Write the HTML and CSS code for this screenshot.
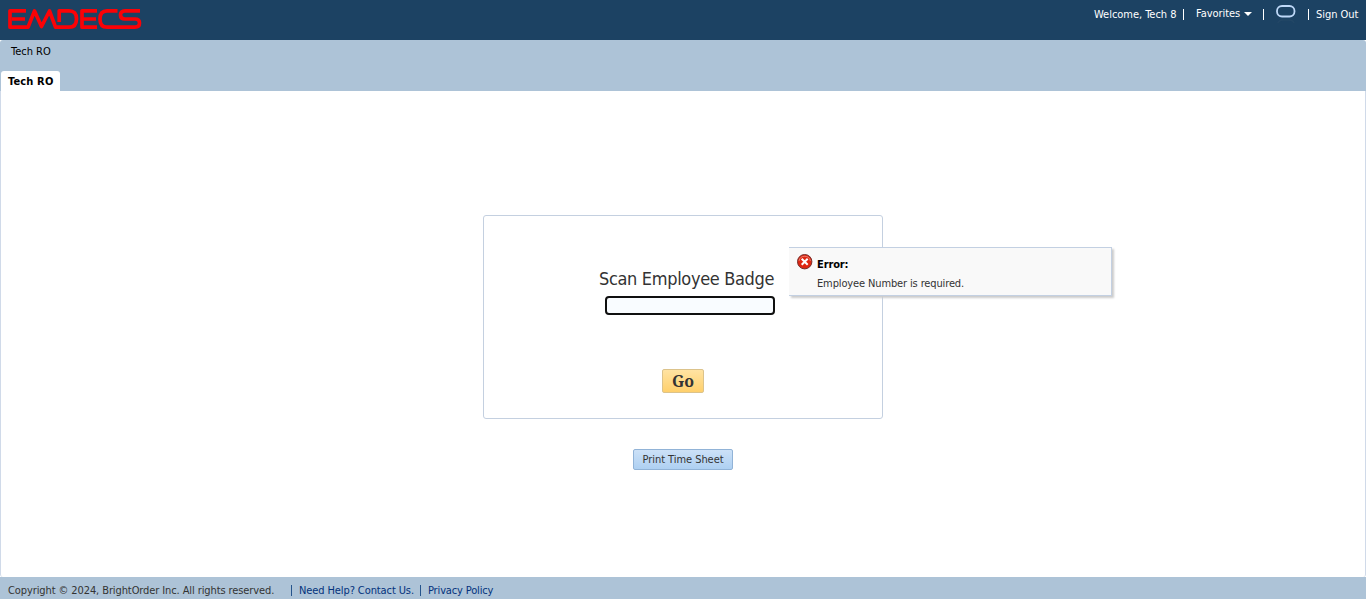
FILE: index.html
```html
<!DOCTYPE html>
<html lang="en">
<head>
<meta charset="utf-8">
<title>Tech RO</title>
<link rel="stylesheet" href="styles.css">
</head>
<body>
<header class="topbar">
  <svg class="logo" width="134" height="22" viewBox="0 0 134 22" role="img" aria-label="EMDECS">
    <g fill="none" stroke="#fb0206" stroke-width="3.7" stroke-linejoin="round">
      <path d="M18 2.8H2V19.2H20L26.5 3L33.5 18.5L41.5 3L47.5 19.2H61Q68.5 19.2 68.5 11T61 2.8H51.2V14"/>
      <path d="M4 11H17M89 2.8H74V19.2H89M75 11H88"/>
      <path d="M109.500 2.8H99Q92 2.800 92 11T99 19.2H127Q131.500 19.2 131.500 15.1T127 11H117Q112.500 11 112.500 7T117 2.8H132"/>
    </g>
  </svg>
  <nav class="user-nav">
    <span class="welcome">Welcome, Tech 8</span><i class="bar bar-a"></i>
    <span class="favorites">Favorites</span><i class="caret"></i><i class="bar bar-b"></i>
    <svg class="status" width="20" height="22" viewBox="0 0 20 22"><rect x="1" y="1" width="17.5" height="10.5" rx="5" fill="none" stroke="#bed8f8" stroke-width="1.8"/><path d="M2 18Q3 15 7 15H13Q17 15 18 18" fill="none" stroke="#294b69" stroke-opacity=".5" stroke-width="1.5"/></svg>
    <i class="bar bar-c"></i><span class="signout">Sign Out</span>
  </nav>
</header>
<div class="crumbs"><span class="crumb">Tech RO</span><div class="tab"><span>Tech RO</span></div></div>
<main class="content">
  <section class="badge-card">
    <label class="badge-label" for="badge">Scan Employee Badge</label>
    <input class="badge-input" id="badge" type="text">
    <button class="go">Go</button>
    <div class="error-tip">
      <svg class="error-icon" width="16" height="16" viewBox="0 0 16 16"><circle cx="7.7" cy="7.7" r="7.2" fill="#df2712" stroke="#74302d" stroke-width="1"/><path d="M2 7A5.8 5.8 0 0 1 13.4 7" fill="none" stroke="#ef9184" stroke-width=".8"/><path d="M4.7 4.7l6 6M10.7 4.7l-6 6" stroke="#fff" stroke-width="2"/></svg>
      <div class="error-text"><strong>Error:</strong><span>Employee Number is required.</span></div>
    </div>
  </section>
  <button class="print"><span>Print Time Sheet</span></button>
</main>
<footer class="footer"><span class="copyright">Copyright © 2024, BrightOrder Inc. All rights reserved.</span><i class="bar"></i><span class="help">Need Help? Contact Us.</span><i class="bar"></i><span class="privacy">Privacy Policy</span></footer>
</body>
</html>
```
FILE: styles.css
```css
* { box-sizing: border-box; }
body { margin: 0; height: 599px; overflow: hidden; display: flex; flex-direction: column; background: #fff; color: #333; font: 11px/14px Tahoma, "DejaVu Sans Condensed", "DejaVu Sans", sans-serif; white-space: nowrap; }
.topbar { height: 40px; background: #1c4263; color: #fff; display: flex; justify-content: space-between; padding: 8px 8px 0; }
.user-nav { display: flex; align-items: flex-start; height: 24px; }
.user-nav span { display: block; text-align: left; }
.welcome { width: 83px; letter-spacing: -.03px; }
.favorites { width: 44px; margin-top: -1px; letter-spacing: -.05px; }
.signout { width: 42px; letter-spacing: -.05px; }
.bar { width: 1px; height: 11px; background: currentColor; flex: none; }
.user-nav .bar { margin-top: 1px; }
.bar-a { margin: 0 12px 0 6px; }
.caret { border: 4px solid transparent; border-top-color: #fff; border-bottom: 0; margin: 4px 11px 0 4px; }
.bar-b { margin-right: 12px; }
.status { margin: -3px 12px 0 0; }
.bar-c { margin-right: 7px; }
.crumbs { height: 51px; background: #adc3d7; color: #000; padding-top: 5px; border-radius: 3px 3px 0 0; }
.crumb { display: block; height: 26px; margin-left: 11px; }
.tab { width: 59px; height: 20px; margin-left: 1px; background: #fff; border-radius: 3px 3px 0 0; padding: 4px 0 0 7px; font-weight: bold; letter-spacing: .15px; }
.content { height: 486px; border: 1px solid #d0dae9; border-width: 0 1px; border-radius: 0 0 3px 3px; display: flex; flex-direction: column; align-items: center; padding-top: 124px; }
.badge-card { position: relative; width: 400px; height: 204px; border: 1px solid #c4d0e0; border-radius: 3px; display: flex; flex-direction: column; padding-top: 51px; }
.badge-label { height: 24px; line-height: 24px; font-size: 18px; letter-spacing: -.33px; margin-left: 115px; }
.badge-input { width: 170px; height: 19px; margin: 5px 0 0 121px; border: 2px solid #101010; border-radius: 4px; background: #f9fcff; padding: 0; outline: none; }
.go { width: 42px; height: 24px; margin: 54px 0 0 178px; padding: 1px 0 0; border: 1px solid #dcc38b; border-radius: 2px; background: linear-gradient(#ffe3a3, #ffd06c); color: #333; font: bold 16px/21px "Noto Serif", "DejaVu Serif Condensed", "DejaVu Serif", serif; }
.error-tip { position: absolute; left: 305px; top: 31px; width: 323px; height: 49px; display: flex; padding: 6px 8px; border: 1px solid #c3d0e2; border-left: 0; background: #f9f9f9; box-shadow: 2px 2px 2px #ccc; }
.error-icon { margin-right: 4px; }
.error-text { display: flex; flex-direction: column; gap: 5px; padding-top: 4px; letter-spacing: -.13px; }
.error-text strong { color: #000; }
.print { width: 100px; height: 21px; margin-top: 30px; padding: 0; border: 1px solid #91b3d7; border-radius: 2px; background: linear-gradient(#cce1f7, #aed0f2); color: #333; font: inherit; letter-spacing: -.05px; }
.footer { height: 22px; flex: none; background: #adc3d7; display: flex; align-items: flex-start; padding: 7px 8px 0; color: #333; letter-spacing: -.1px; }
.footer .bar { margin: 1px 7px 0 0; background: #25548c; }
.copyright { width: 283px; }
.help { width: 121px; color: #03327c; }
.privacy { color: #03327c; letter-spacing: -.15px; }
```
